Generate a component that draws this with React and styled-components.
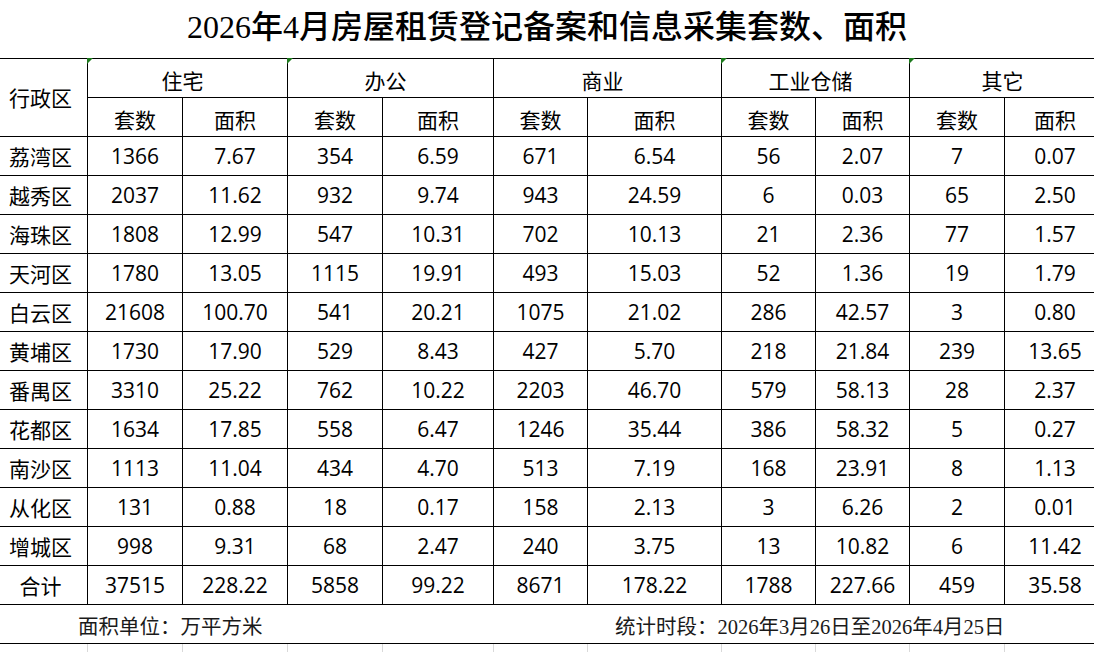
import React from "react";
import styled, { createGlobalStyle } from "styled-components";

const GlobalStyle = createGlobalStyle`
  html, body {
    margin: 0;
    padding: 0;
    background: #ffffff;
    overflow: hidden;
  }
  body {
    font-family: "Noto Sans CJK SC", sans-serif;
    color: #000;
  }
`;

const COLS = "87px 94px 104px 94px 110px 93px 133px 93px 93px 94px 100px";

const Page = styled.div`
  width: 1094px;
  height: 652px;
  overflow: hidden;
`;

const Title = styled.h1`
  margin: 0;
  height: 58px;
  box-sizing: border-box;
  padding-bottom: 11px;
  display: flex;
  align-items: center;
  justify-content: center;
  font-family: "Liberation Serif", "Noto Sans CJK SC", serif;
  font-size: 32px;
  font-weight: 500;
  letter-spacing: 0;
  white-space: nowrap;
`;

const Sheet = styled.div`
  display: grid;
  grid-template-columns: ${COLS};
  grid-auto-rows: 38px;
  gap: 1px;
  width: max-content;
  background: #000;
  border-top: 1px solid #000;
  border-bottom: 1px solid #000;
`;

const Cell = styled.div`
  position: relative;
  background: #fff;
  display: flex;
  align-items: center;
  justify-content: center;
  box-sizing: border-box;
  white-space: nowrap;
  font-family: ${(p) =>
    p.$num ? '"Open Sans", "Noto Sans CJK SC", sans-serif' : '"Noto Sans CJK SC", sans-serif'};
  font-size: 21px;
  line-height: 1;
  padding-right: ${(p) => p.$shift || 0}px;
  padding-top: ${(p) => p.$drop || 0}px;
  grid-column: ${(p) => (p.$span ? `span ${p.$span}` : "auto")};
  grid-row: ${(p) => (p.$rows ? `span ${p.$rows}` : "auto")};

  ${(p) =>
    p.$marked &&
    `
    &::before {
      content: "";
      position: absolute;
      top: -1px;
      left: -1px;
      width: 0;
      height: 0;
      border-top: 6px solid #1d7a1d;
      border-right: 6px solid transparent;
    }
  `}
`;

const FooterCell = styled.div`
  grid-column: 1 / -1;
  background: #fff;
  display: grid;
  grid-template-columns: 615px 1fr;
  align-items: center;
  padding-top: 2px;
  box-sizing: border-box;
  font-family: "Liberation Serif", "Noto Sans CJK SC", serif;
  font-size: 20.5px;
  color: #1a1a1a;
  white-space: nowrap;
`;

const FooterNote = styled.span`
  padding-left: ${(p) => p.$indent || 0}px;
`;

const Gridlines = styled.div`
  display: grid;
  grid-template-columns: ${COLS};
  grid-auto-rows: 30px;
  gap: 1px;
  width: max-content;
  background: #d9d9d9;
`;

const Blank = styled.div`
  background: #fff;
`;

const groups = [
  { name: "住宅", marked: true },
  { name: "办公", marked: true },
  { name: "商业", marked: false },
  { name: "工业仓储", marked: true },
  { name: "其它", marked: true },
];

const rows = [
  ["荔湾区", "1366", "7.67", "354", "6.59", "671", "6.54", "56", "2.07", "7", "0.07"],
  ["越秀区", "2037", "11.62", "932", "9.74", "943", "24.59", "6", "0.03", "65", "2.50"],
  ["海珠区", "1808", "12.99", "547", "10.31", "702", "10.13", "21", "2.36", "77", "1.57"],
  ["天河区", "1780", "13.05", "1115", "19.91", "493", "15.03", "52", "1.36", "19", "1.79"],
  ["白云区", "21608", "100.70", "541", "20.21", "1075", "21.02", "286", "42.57", "3", "0.80"],
  ["黄埔区", "1730", "17.90", "529", "8.43", "427", "5.70", "218", "21.84", "239", "13.65"],
  ["番禺区", "3310", "25.22", "762", "10.22", "2203", "46.70", "579", "58.13", "28", "2.37"],
  ["花都区", "1634", "17.85", "558", "6.47", "1246", "35.44", "386", "58.32", "5", "0.27"],
  ["南沙区", "1113", "11.04", "434", "4.70", "513", "7.19", "168", "23.91", "8", "1.13"],
  ["从化区", "131", "0.88", "18", "0.17", "158", "2.13", "3", "6.26", "2", "0.01"],
  ["增城区", "998", "9.31", "68", "2.47", "240", "3.75", "13", "10.82", "6", "11.42"],
  ["合计", "37515", "228.22", "5858", "99.22", "8671", "178.22", "1788", "227.66", "459", "35.58"],
];

export default function App() {
  return (
    <Page>
      <GlobalStyle />
      <Title>2026年4月房屋租赁登记备案和信息采集套数、面积</Title>
      <Sheet>
        <Cell $rows={2} $shift={6}>行政区</Cell>
        {groups.map((g) => (
          <Cell key={g.name} $span={2} $shift={10} $drop={4} $marked={g.marked}>
            {g.name}
          </Cell>
        ))}
        {groups.map((g) => (
          <React.Fragment key={g.name + "-sub"}>
            <Cell $drop={4}>套数</Cell>
            <Cell $drop={4}>面积</Cell>
          </React.Fragment>
        ))}
        {rows.map((r) =>
          r.map((v, i) => (
            <Cell key={r[0] + i} $num={i > 0} $shift={i === 0 ? 6 : 0}>
              {v}
            </Cell>
          ))
        )}
        <FooterCell>
          <FooterNote $indent={78}>面积单位：万平方米</FooterNote>
          <FooterNote>统计时段：2026年3月26日至2026年4月25日</FooterNote>
        </FooterCell>
      </Sheet>
      <Gridlines>
        {Array.from({ length: 11 }).map((_, i) => (
          <Blank key={i} />
        ))}
      </Gridlines>
    </Page>
  );
}
